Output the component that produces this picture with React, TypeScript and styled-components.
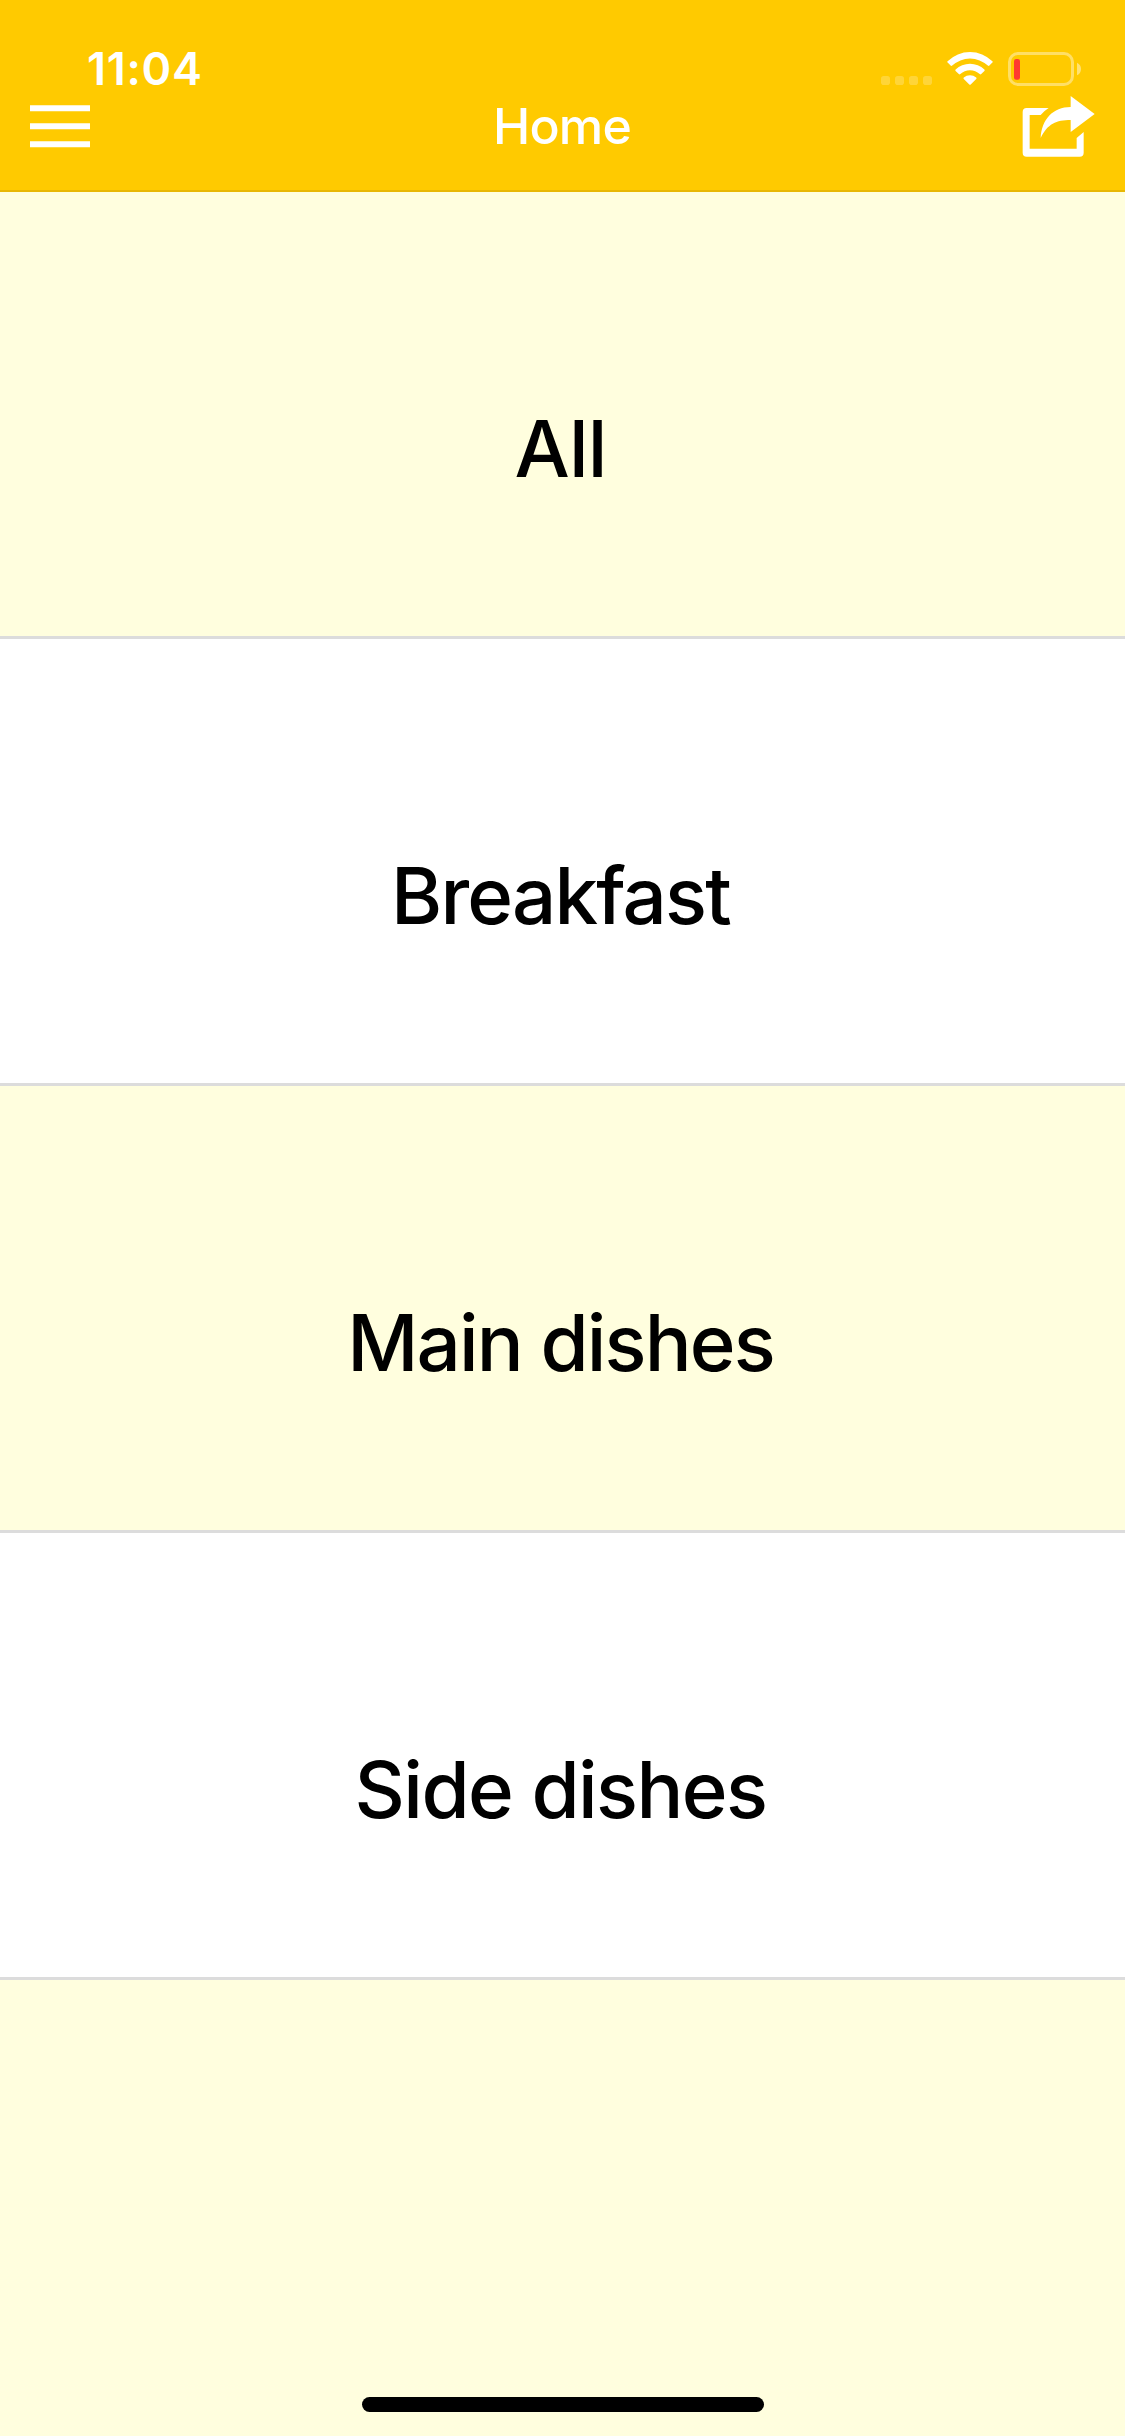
import React from "react";
import styled, { createGlobalStyle } from "styled-components";

const GlobalStyle = createGlobalStyle`
  * { box-sizing: border-box; }
  body { margin: 0; background: #fffede; }
`;

const Screen = styled.div`
  width: 1125px;
  height: 2436px;
  display: flex;
  flex-direction: column;
  background: #fffede;
  font-family: Inter, "Liberation Sans", sans-serif;
  color: #000;
  overflow: hidden;
`;

const Header = styled.header`
  flex: none;
  height: 192px;
  background: #ffca00;
  border-bottom: 2px solid #e8b704;
  color: #fff;
`;

const StatusBar = styled.div`
  height: 88px;
  padding: 50px 42px 0 87px;
  display: flex;
  justify-content: space-between;
`;

const Clock = styled.time`
  font-size: 45px;
  font-weight: 600;
  line-height: 38px;
  letter-spacing: 0.7px;
`;

const StatusIcons = styled.div`
  display: flex;
  height: 38px;
`;

const NavBar = styled.nav`
  height: 76px;
  padding: 0 29px 0 30px;
  display: grid;
  grid-template-columns: 1fr auto 1fr;
  align-items: center;
`;

const IconButton = styled.button<{ $end?: boolean }>`
  justify-self: ${(p) => (p.$end ? "end" : "start")};
  display: flex;
  padding: 0;
  border: 0;
  background: none;
  color: inherit;
`;

const Title = styled.h1`
  margin: 0;
  padding-right: 2px;
  font-size: 50px;
  font-weight: 500;
  line-height: 60px;
  letter-spacing: -0.8px;
`;

const Categories = styled.ul`
  margin: 0;
  padding: 0;
  list-style: none;
`;

const Category = styled.li<{ $tinted: boolean }>`
  height: 447px;
  padding: 69px 4px 0 0;
  display: flex;
  align-items: center;
  justify-content: center;
  background: ${(p) => (p.$tinted ? "#fffede" : "#fff")};
  border-bottom: 3px solid #dcdcdc;
`;

const Label = styled.span<{ $tracking: number }>`
  font-size: 78px;
  font-weight: 500;
  line-height: 94px;
  letter-spacing: ${(p) => p.$tracking}px;
`;

const Footer = styled.footer`
  margin-top: auto;
  padding-bottom: 24px;
  display: flex;
  justify-content: center;
`;

const HomeIndicator = styled.div`
  width: 402px;
  height: 15px;
  border-radius: 7.5px;
  background: #000;
`;

const StatusGlyphs = () => (
  <svg width="203" height="38" viewBox="880 50 203 38" fill="#fff">
    <g opacity="0.22">
      {[881, 895, 909, 923].map((x) => (
        <rect key={x} x={x} y="76" width="9" height="9" rx="2.8" />
      ))}
    </g>
    <g>
      <path d="M947.6 61.2a32 32 0 0 1 44.8 0q.7.7 0 1.4l-3 3q-.8.7-1.6 0a26 26 0 0 0-35.6 0q-.8.7-1.6 0l-3-3q-.7-.7 0-1.4Z" />
      <path d="M955.6 69.5a20.6 20.6 0 0 1 28.8 0q.7.7 0 1.4l-3.2 3.2q-.8.7-1.5 0a14 14 0 0 0-19.4 0q-.7.7-1.5 0l-3.2-3.2q-.7-.7 0-1.4Z" />
      <path d="M963.8 77.6a9.4 9.4 0 0 1 12.4 0q.8.7 0 1.5l-5.5 5.4q-.7.7-1.4 0l-5.5-5.4q-.8-.8 0-1.5Z" />
    </g>
    <rect x="1009.5" y="53.5" width="63" height="31" rx="8.5" fill="none" stroke="#fff" strokeWidth="3" opacity="0.4" />
    <path d="M1077 62.7q4 2 4 6.3t-4 6.3Z" opacity="0.45" />
    <rect x="1014" y="59" width="6" height="20.7" rx="2.2" fill="#ff3b30" />
  </svg>
);

const MenuIcon = () => (
  <svg width="60" height="43" viewBox="0 0 60 43" fill="currentColor">
    <path d="M0 .2h60v6H0ZM0 18.2h60v6H0ZM0 36.2h60v6H0Z" />
  </svg>
);

const ShareIcon = () => (
  <svg width="75" height="62" viewBox="484 195 225 186" fill="currentColor">
    <path d="M501 234H567Q554 242 543 255H510V356H651V324L672 306V368Q672 380 660 380H501Q489 380 489 368V246Q489 234 501 234Z" />
    <path d="M633 198 705 252 633 306V270C590 270 563 282 543 324C546 268 580 231 633 231Z" />
  </svg>
);

const categories = [
  { name: "All", tracking: -0.9 },
  { name: "Breakfast", tracking: -1.85 },
  { name: "Main dishes", tracking: -1.9 },
  { name: "Side dishes", tracking: -1.6 },
];

export default function App() {
  return (
    <Screen>
      <GlobalStyle />
      <Header>
        <StatusBar>
          <Clock>11:04</Clock>
          <StatusIcons>
            <StatusGlyphs />
          </StatusIcons>
        </StatusBar>
        <NavBar>
          <IconButton aria-label="Menu">
            <MenuIcon />
          </IconButton>
          <Title>Home</Title>
          <IconButton $end aria-label="Share">
            <ShareIcon />
          </IconButton>
        </NavBar>
      </Header>
      <Categories>
        {categories.map((c, i) => (
          <Category key={c.name} $tinted={i % 2 === 0}>
            <Label $tracking={c.tracking}>{c.name}</Label>
          </Category>
        ))}
      </Categories>
      <Footer>
        <HomeIndicator />
      </Footer>
    </Screen>
  );
}
